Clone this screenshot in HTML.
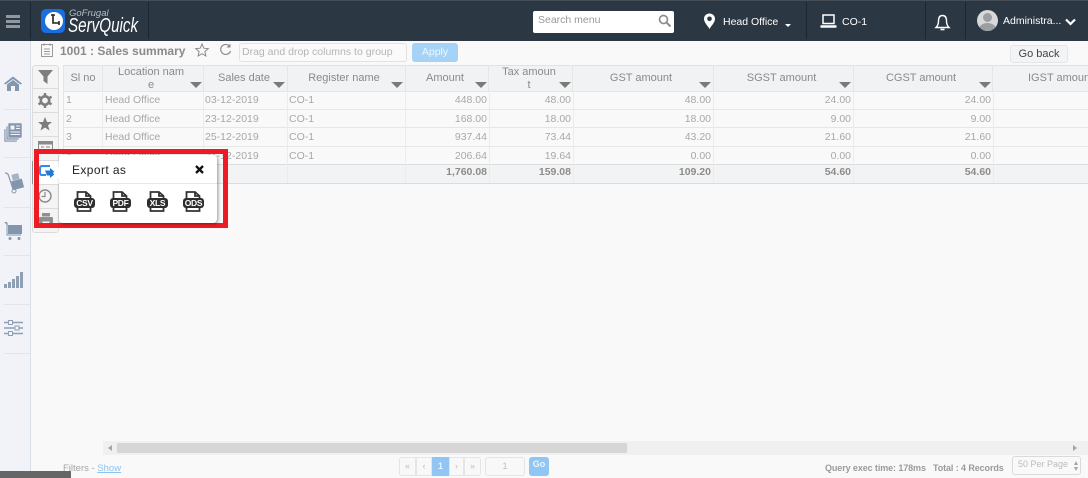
<!DOCTYPE html>
<html><head><meta charset="utf-8"><style>
html,body{margin:0;padding:0}
body{width:1088px;height:478px;position:relative;overflow:hidden;background:#f9f9f9;font-family:"Liberation Sans",sans-serif;font-size:10.5px;color:#a3a3a3}
div,span{position:absolute;box-sizing:border-box;white-space:nowrap}
svg{position:absolute;overflow:visible}
.hd{background:#f1f2f3;top:66px;height:25px;color:#8a8a8a;font-size:11px;text-align:center;line-height:13px;border-right:1px solid #e6e6e6}
.arr{top:82px;width:0;height:0;border-left:6px solid transparent;border-right:6px solid transparent;border-top:6px solid #7a7a7a}
.c{height:18px;line-height:18px;font-size:10.5px;color:#a8a8a8}
.r{text-align:right}
.h{height:1px;background:#e6e6e6;left:64px;width:1024px}
.v{width:1px;background:#ececec;top:91px;height:92px}
.t{font-weight:bold;color:#8c8c8c;top:163px;height:18px;line-height:18px;text-align:right;font-size:10.5px}
.sep{left:4px;width:26px;height:1px;background:#e1e4ea}
.bdg{background:#2d2d2d;color:#fff;font-weight:bold;font-size:8.5px;line-height:10px;height:10px;border-radius:3px;text-align:center;top:198px;width:21px;letter-spacing:-.3px}
.pg{top:457px;height:19px;border:1px solid #e5e5e5;background:#f8f8f8;font-size:9px;color:#bdbdbd;text-align:center;line-height:17px}
</style></head><body>
<!-- top bar -->
<div style="left:0;top:0;width:1088px;height:41px;background:#2c3744;border-top:1px solid #454d56"></div>
<div style="left:6px;top:15px;width:14px;height:2.5px;background:#8f98a1"></div>
<div style="left:6px;top:20px;width:14px;height:2.5px;background:#8f98a1"></div>
<div style="left:6px;top:25px;width:14px;height:2.5px;background:#8f98a1"></div>
<div style="left:30px;top:2px;width:1px;height:37px;background:#1d252e"></div>
<div style="left:148px;top:2px;width:1px;height:37px;background:#1d252e"></div>
<div style="left:41px;top:9px;width:24px;height:24px;border-radius:5px;background:#1a6fe0"></div>
<div style="left:45px;top:12px;width:18px;height:18px;border-radius:50%;background:#fff"></div>
<svg style="left:45px;top:12px" width="18" height="18"><path d="M8 3V11H14M6 3H10M14 9V13" stroke="#222" stroke-width="1.6" fill="none"/></svg>
<div style="left:69px;top:7px;font-size:9.5px;font-style:italic;color:#b5bcc4;line-height:13px">GoFrugal</div>
<div style="left:68px;top:15px;font-size:20px;font-style:italic;color:#fff;line-height:22px;transform:scaleX(.76);transform-origin:0 0;font-weight:normal">ServQuick</div>
<div style="left:533px;top:11px;width:141px;height:22px;background:#fff;border-radius:2px;font-size:10.5px;line-height:19px;color:#999;padding-left:5px">Search menu</div>
<svg style="left:658px;top:14px" width="13" height="13"><circle cx="5.5" cy="5.5" r="4" stroke="#8d8d8d" stroke-width="1.7" fill="none"/><path d="M8.5 8.500L12.500 12.500" stroke="#8d8d8d" stroke-width="2"/></svg>
<svg style="left:703px;top:13px" width="13" height="18"><path d="M6.500 0.500C3 .5 1 3 1 6c0 3.500 4 7 5.500 10C8 13 12 9.500 12 6c0-3-2-5.500-5.500-5.500z" fill="#fff"/><circle cx="6.500" cy="5.800" r="2.300" fill="#2c3744"/></svg>
<div style="left:723px;top:16px;font-size:10.5px;line-height:13px;color:#fff">Head Office</div>
<div style="left:785px;top:24px;width:0;height:0;border-left:3.5px solid transparent;border-right:3.5px solid transparent;border-top:3.5px solid #fff"></div>
<div style="left:806px;top:2px;width:1px;height:37px;background:#1d252e"></div>
<svg style="left:820px;top:14px" width="17" height="14"><rect x="3" y="1" width="11" height="8.500" stroke="#fff" stroke-width="1.500" fill="none"/><path d="M.5 12.500H16.500" stroke="#fff" stroke-width="2.500"/></svg>
<div style="left:842px;top:16px;font-size:10.5px;line-height:13px;color:#fff">CO-1</div>
<div style="left:925px;top:2px;width:1px;height:37px;background:#1d252e"></div>
<svg style="left:935px;top:14px" width="15" height="18"><path d="M7.500 1.500C4.500 1.500 3.500 4 3.500 7c0 3-1 5-2.500 6.500h13c-1.500-1.500-2.500-3.500-2.500-6.500 0-3-1-5.500-4-5.500z" stroke="#fff" stroke-width="1.400" fill="none"/><path d="M5.500 15.500h4" stroke="#fff" stroke-width="1.600"/></svg>
<div style="left:965px;top:2px;width:1px;height:37px;background:#1d252e"></div>
<div style="left:977px;top:10px;width:21px;height:21px;border-radius:50%;background:#d8d8d8;overflow:hidden"><div style="left:6px;top:3px;width:9px;height:9px;border-radius:50%;background:#9b9ea3"></div><div style="left:2px;top:13px;width:17px;height:12px;border-radius:50%;background:#9b9ea3"></div></div>
<div style="left:1003px;top:15px;font-size:10.5px;line-height:13px;color:#fff">Administra...</div>
<svg style="left:1065px;top:18px" width="11" height="8"><path d="M1 1.500L5.500 6L10 1.500" stroke="#fff" stroke-width="2.200" fill="none"/></svg>
<!-- sidebar -->
<div style="left:0;top:41px;width:31px;height:437px;background:#f1f3f8;border-right:1px solid #d8dfe9"></div>
<svg style="left:4px;top:76px" width="18" height="15"><path d="M0 7.500L9 .5L18 7.500L16.500 8.500L9 3L1.500 8.500Z M3 8.500L9 4L15 8.500V15H11V10H7V15H3Z" fill="#8496ad"/></svg>
<div class="sep" style="top:109px"></div>
<svg style="left:4px;top:123px" width="18" height="19"><rect x="0" y="6" width="13" height="13" rx="1" fill="#a6b3c4"/><rect x="2" y="3" width="13" height="14" rx="1" fill="#8fa0b5" stroke="#f1f3f8" stroke-width=".6"/><rect x="4" y="0" width="14" height="15" rx="1" fill="#8496ad" stroke="#f1f3f8" stroke-width=".6"/><rect x="6.500" y="2.500" width="4" height="4" fill="#f1f3f8"/><path d="M12 3h4M12 5.500h4M6.500 9h9.500M6.500 11.500h9.500" stroke="#f1f3f8"/></svg>
<div class="sep" style="top:157px"></div>
<svg style="left:4px;top:172px" width="20" height="22"><path d="M1 1C4 1 4 2 5 5L9 17" stroke="#8496ad" stroke-width="1.200" fill="none"/><circle cx="10" cy="19" r="2" stroke="#8496ad" fill="none"/><rect x="8" y="2" width="7" height="6" fill="#a6b3c4" transform="rotate(-15 11 5)"/><rect x="8" y="8" width="11" height="9" fill="#8496ad" transform="rotate(-15 13 12)"/></svg>
<div class="sep" style="top:207px"></div>
<svg style="left:4px;top:222px" width="18" height="18"><path d="M0 0H3L4 3H18V12H4V3" fill="#8496ad"/><path d="M1 1H3V13H17" stroke="#8496ad" fill="none"/><circle cx="6" cy="16.500" r="1.500" fill="#8496ad"/><circle cx="15" cy="16.500" r="1.500" fill="#8496ad"/></svg>
<div class="sep" style="top:255px"></div>
<svg style="left:4px;top:271px" width="19" height="17"><rect x="0" y="13" width="3" height="4" fill="#8fa0b5"/><rect x="4" y="11" width="3" height="6" fill="#8fa0b5"/><rect x="8" y="8" width="3" height="9" fill="#8fa0b5"/><rect x="12" y="5" width="3" height="12" fill="#8fa0b5"/><rect x="16" y="1" width="3" height="16" fill="#8fa0b5"/></svg>
<div class="sep" style="top:304px"></div>
<svg style="left:4px;top:320px" width="19" height="16"><path d="M0 2.500H19M0 8H19M0 13.500H19" stroke="#8fa0b5" stroke-width="1.500"/><rect x="4.500" y=".5" width="4" height="4" fill="#f1f3f8" stroke="#8fa0b5"/><rect x="11" y="6" width="4" height="4" fill="#f1f3f8" stroke="#8fa0b5"/><rect x="4.500" y="11.500" width="4" height="4" fill="#f1f3f8" stroke="#8fa0b5"/></svg>
<div class="sep" style="top:353px"></div>
<!-- title bar -->
<svg style="left:41px;top:43px" width="12" height="14"><rect x=".5" y="1.500" width="11" height="12" stroke="#9a9a9a" fill="none"/><path d="M3 .5V3M9 .5V3M3 6H9M3 8.500H9M3 11H9" stroke="#9a9a9a"/></svg>
<div style="left:60px;top:44px;font-size:12px;font-weight:bold;color:#8a8a8a;line-height:14px">1001 : Sales summary</div>
<svg style="left:195px;top:43px" width="14" height="14"><path d="M7 1L8.800 5.200L13.300 5.600L9.900 8.600L10.900 13L7 10.700L3.100 13L4.100 8.600L.7 5.600L5.200 5.200Z" stroke="#8a8a8a" fill="none"/></svg>
<svg style="left:219px;top:43px" width="13" height="13"><path d="M10.800 3.500A5 5 0 1 0 11.500 8" stroke="#8a8a8a" stroke-width="1.200" fill="none"/><path d="M11.500 .5V4.500H7.500" fill="#8a8a8a"/></svg>
<div style="left:239px;top:43px;width:168px;height:19px;border:1px solid #e2e2e2;border-radius:3px;background:#fafafa;color:#b5b5b5;font-size:10.5px;line-height:17px;padding-left:2px">Drag and drop columns to group</div>
<div style="left:412px;top:43px;width:46px;height:19px;background:#a5d3f7;border-radius:3px;color:#eef7fe;font-size:10.5px;line-height:18px;text-align:center">Apply</div>
<div style="left:1010px;top:45px;width:58px;height:18px;background:#f3f4f5;border:1px solid #e6e6e6;border-radius:3px;color:#444;font-size:11px;line-height:16px;text-align:center">Go back</div>
<!-- toolbar -->
<div style="left:32px;top:65px;width:27px;height:168px;background:#f4f4f4;border:1px solid #dcdcdc;border-radius:3px"></div>
<div style="left:32px;top:88px;width:27px;height:1px;background:#dcdcdc"></div>
<div style="left:32px;top:112px;width:27px;height:1px;background:#dcdcdc"></div>
<div style="left:32px;top:136px;width:27px;height:1px;background:#dcdcdc"></div>
<div style="left:32px;top:160px;width:27px;height:1px;background:#dcdcdc"></div>
<div style="left:32px;top:184px;width:27px;height:1px;background:#dcdcdc"></div>
<div style="left:32px;top:208px;width:27px;height:1px;background:#dcdcdc"></div>
<svg style="left:38px;top:70px" width="15" height="14"><path d="M0 0H15L9.500 6.500V14L5.500 11V6.500Z" fill="#7d7d7d"/></svg>
<svg style="left:38px;top:93px" width="14" height="15"><circle cx="7" cy="7.500" r="4.200" stroke="#7d7d7d" stroke-width="2.600" fill="none"/><path d="M7 0V3M7 12V15M.5 3.700L3 5.200M11 9.800L13.500 11.300M.5 11.300L3 9.800M11 5.200L13.500 3.700" stroke="#7d7d7d" stroke-width="2.400"/></svg>
<svg style="left:38px;top:117px" width="14" height="14"><path d="M7 0L9 5H14L10 8.300L11.500 13.500L7 10.500L2.500 13.500L4 8.300L0 5H5Z" fill="#7d7d7d"/></svg>
<svg style="left:38px;top:141px" width="15" height="13"><rect x=".5" y=".5" width="14" height="12" stroke="#8a8a8a" fill="none"/><rect x="1" y="1" width="13" height="2.500" fill="#8a8a8a"/><path d="M3 6H6M3 9H6M8 6H12" stroke="#8a8a8a"/></svg>
<div style="left:32px;top:161px;width:28px;height:23px;background:#fff;border-left:1px solid #8d8d8d"></div>
<svg style="left:39px;top:164px" width="17" height="15"><path d="M11 2H3Q1 2 1 4V9Q1 11 3 11H7" stroke="#2d8ee8" stroke-width="2" fill="none"/><path d="M6 6.500L11 6.500L11 4L17 9L11 14V11.500L8 11.500Z" fill="#1f79d6"/></svg>
<svg style="left:38px;top:189px" width="14" height="14"><circle cx="7" cy="7" r="6" stroke="#8a8a8a" stroke-width="1.400" fill="none"/><path d="M7 3V7.500H3.500" stroke="#8a8a8a" stroke-width="1.200" fill="none"/></svg>
<svg style="left:39px;top:213px" width="14" height="13"><rect x="3" y="0" width="8" height="3.500" fill="#8f8f8f"/><rect x="0" y="4" width="14" height="6" rx="1" fill="#8f8f8f"/><rect x="3" y="8" width="8" height="5" fill="#f4f4f4" stroke="#8f8f8f"/></svg>
<!-- table -->
<div style="left:63px;top:65px;width:1025px;height:1px;background:#e2e2e2"></div>
<div style="left:63px;top:65px;width:1px;height:118px;background:#e4e4e4"></div>
<div class="hd" style="left:64px;width:39px;padding-top:6px">Sl no</div>
<div class="hd" style="left:103px;width:101px;padding:0 4px 0 0">Location nam<br>e</div>
<div class="hd" style="left:204px;width:84px;padding:6px 3px 0 0">Sales date</div>
<div class="hd" style="left:288px;width:118px;padding:6px 5px 0 0">Register name</div>
<div class="hd" style="left:406px;width:83px;padding:6px 4px 0 0">Amount</div>
<div class="hd" style="left:489px;width:84px;padding:0 3px 0 0">Tax amoun<br>t</div>
<div class="hd" style="left:573px;width:141px;padding:6px 4px 0 0">GST amount</div>
<div class="hd" style="left:714px;width:140px;padding:6px 4px 0 0">SGST amount</div>
<div class="hd" style="left:854px;width:139px;padding:6px 4px 0 0">CGST amount</div>
<div class="hd" style="left:993px;width:95px;padding:6px 0 0 35px;text-align:left;border:none">IGST amount</div>
<div class="arr" style="left:190px"></div><div class="arr" style="left:273px"></div><div class="arr" style="left:391px"></div><div class="arr" style="left:475px"></div><div class="arr" style="left:559px"></div><div class="arr" style="left:699px"></div><div class="arr" style="left:839px"></div><div class="arr" style="left:979px"></div>
<div class="h" style="top:91px"></div><div class="h" style="top:109px"></div><div class="h" style="top:127px"></div><div class="h" style="top:146px"></div>
<div style="left:64px;top:165px;width:1024px;height:18px;background:#f2f3f4"></div>
<div class="h" style="top:164px;background:#dcdcdc"></div><div class="h" style="top:183px;background:#dcdcdc"></div>
<div class="v" style="left:102px"></div><div class="v" style="left:203px"></div><div class="v" style="left:287px"></div><div class="v" style="left:405px"></div><div class="v" style="left:489px"></div><div class="v" style="left:573px"></div><div class="v" style="left:713px"></div><div class="v" style="left:853px"></div><div class="v" style="left:993px"></div>
<div class="c" style="left:66px;top:91px">1</div><div class="c" style="left:105px;top:91px">Head Office</div><div class="c" style="left:205px;top:91px">03-12-2019</div><div class="c" style="left:289px;top:91px">CO-1</div>
<div class="c" style="left:66px;top:110px">2</div><div class="c" style="left:105px;top:110px">Head Office</div><div class="c" style="left:205px;top:110px">23-12-2019</div><div class="c" style="left:289px;top:110px">CO-1</div>
<div class="c" style="left:66px;top:128px">3</div><div class="c" style="left:105px;top:128px">Head Office</div><div class="c" style="left:205px;top:128px">25-12-2019</div><div class="c" style="left:289px;top:128px">CO-1</div>
<div class="c" style="left:66px;top:147px">4</div><div class="c" style="left:105px;top:147px">Head Office</div><div class="c" style="left:205px;top:147px">31-12-2019</div><div class="c" style="left:289px;top:147px">CO-1</div>
<div class="c r" style="right:601px;top:91px">448.00</div><div class="c r" style="right:517px;top:91px">48.00</div><div class="c r" style="right:377px;top:91px">48.00</div><div class="c r" style="right:237px;top:91px">24.00</div><div class="c r" style="right:97px;top:91px">24.00</div>
<div class="c r" style="right:601px;top:110px">168.00</div><div class="c r" style="right:517px;top:110px">18.00</div><div class="c r" style="right:377px;top:110px">18.00</div><div class="c r" style="right:237px;top:110px">9.00</div><div class="c r" style="right:97px;top:110px">9.00</div>
<div class="c r" style="right:601px;top:128px">937.44</div><div class="c r" style="right:517px;top:128px">73.44</div><div class="c r" style="right:377px;top:128px">43.20</div><div class="c r" style="right:237px;top:128px">21.60</div><div class="c r" style="right:97px;top:128px">21.60</div>
<div class="c r" style="right:601px;top:147px">206.64</div><div class="c r" style="right:517px;top:147px">19.64</div><div class="c r" style="right:377px;top:147px">0.00</div><div class="c r" style="right:237px;top:147px">0.00</div><div class="c r" style="right:97px;top:147px">0.00</div>
<div class="t" style="right:601px">1,760.08</div><div class="t" style="right:517px">159.08</div><div class="t" style="right:377px">109.20</div><div class="t" style="right:237px">54.60</div><div class="t" style="right:97px">54.60</div>
<!-- popup -->
<div style="left:34px;top:149px;width:194px;height:79px;border:5px solid #ed1c24"></div>
<div style="left:59px;top:155px;width:158px;height:68px;background:#fff;border-radius:4px;box-shadow:1px 1px 3px rgba(0,0,0,.4)"></div>
<div style="left:55px;top:168px;width:10px;height:10px;background:#fff;transform:rotate(45deg)"></div>
<div style="left:59px;top:183px;width:158px;height:1px;background:#e8e8e8"></div>
<div style="left:72px;top:163px;font-size:12px;line-height:15px;color:#222;letter-spacing:.4px">Export as</div>
<svg style="left:195px;top:165px" width="9" height="9"><path d="M1 1L8 8M8 1L1 8" stroke="#111" stroke-width="2.300"/></svg>
<svg style="left:75px;top:191px" width="18" height="21"><path d="M2.500 8V1H11L15.500 5V8M11 1V5H15.500M2.500 14V20H15.500V14" stroke="#333" stroke-width="1.800" fill="none"/></svg>
<svg style="left:111px;top:191px" width="18" height="21"><path d="M2.500 8V1H11L15.500 5V8M11 1V5H15.500M2.500 14V20H15.500V14" stroke="#333" stroke-width="1.800" fill="none"/></svg>
<svg style="left:148px;top:191px" width="18" height="21"><path d="M2.500 8V1H11L15.500 5V8M11 1V5H15.500M2.500 14V20H15.500V14" stroke="#333" stroke-width="1.800" fill="none"/></svg>
<svg style="left:184px;top:191px" width="18" height="21"><path d="M2.500 8V1H11L15.500 5V8M11 1V5H15.500M2.500 14V20H15.500V14" stroke="#333" stroke-width="1.800" fill="none"/></svg>
<div class="bdg" style="left:74px">CSV</div><div class="bdg" style="left:110px">PDF</div><div class="bdg" style="left:147px">XLS</div><div class="bdg" style="left:183px">ODS</div>
<!-- scrollbar -->
<div style="left:103px;top:441px;width:985px;height:14px;background:#f0f0f0"></div>
<div style="left:117px;top:443px;width:510px;height:10px;background:#d6d6d6"></div>
<div style="left:108px;top:445px;width:0;height:0;border-top:3px solid transparent;border-bottom:3px solid transparent;border-right:4px solid #a5a5a5"></div>
<div style="left:1073px;top:445px;width:0;height:0;border-top:3px solid transparent;border-bottom:3px solid transparent;border-left:4px solid #a5a5a5"></div>
<!-- footer -->
<div style="left:0;top:471px;width:71px;height:7px;background:#666"></div>
<div style="left:63px;top:463px;font-size:9.5px;line-height:11px;color:#a5a5a5">Filters - <span style="position:static;color:#8cc3f0;text-decoration:underline">Show</span></div>
<div class="pg" style="left:399px;width:17px;border-radius:3px 0 0 3px">«</div>
<div class="pg" style="left:416px;width:16px">‹</div>
<div class="pg" style="left:432px;width:17px;background:#91c6f4;border-color:#91c6f4;color:#eaf5fe;font-weight:bold">1</div>
<div class="pg" style="left:449px;width:15px">›</div>
<div class="pg" style="left:464px;width:17px;border-radius:0 3px 3px 0">»</div>
<div class="pg" style="left:485px;width:40px;border-radius:3px">1</div>
<div style="left:529px;top:457px;width:20px;height:19px;background:#91c6f4;border-radius:3px;color:#eaf5fe;font-size:9px;font-weight:bold;line-height:15px;text-align:center">Go</div>
<div style="left:825px;top:463px;font-size:9px;line-height:11px;color:#9a9a9a;font-weight:bold;letter-spacing:-.1px">Query exec time: 178ms</div>
<div style="left:933px;top:463px;font-size:9px;line-height:11px;color:#9a9a9a;font-weight:bold;letter-spacing:-.1px">Total : 4 Records</div>
<div style="left:1012px;top:456px;width:69px;height:19px;border:1px solid #dadada;border-radius:3px;font-size:9px;line-height:15px;color:#bcbcbc;padding-left:5px">50 Per Page</div>
<div style="left:1074px;top:461px;width:0;height:0;border-left:2.5px solid transparent;border-right:2.5px solid transparent;border-bottom:4px solid #a5a5a5"></div>
<div style="left:1074px;top:467px;width:0;height:0;border-left:2.5px solid transparent;border-right:2.5px solid transparent;border-top:4px solid #a5a5a5"></div>
</body></html>
